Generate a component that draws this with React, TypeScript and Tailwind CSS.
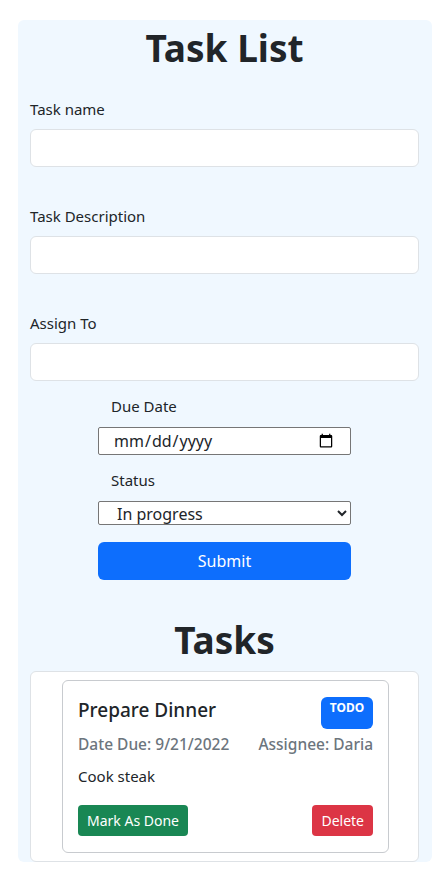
import { useState } from "react";

export default function App() {
  return (
    <main className="min-h-screen bg-white pt-[20px] pr-[14px] pl-[18px] font-['Noto_Sans',sans-serif] text-[#212529]">
      <div className="rounded-md bg-[#f0f8ff] pr-[13px] pl-[12px]">
        <h1 className="pt-[4px] text-center text-[37px] leading-[48px] font-bold">Task List</h1>

        <form className="mt-[25px]" onSubmit={(e) => e.preventDefault()}>
          <Field label="Task name" />
          <Field label="Task Description" />
          <Field label="Assign To" last />

          <div className="mx-auto flex w-[253px] flex-col">
            <label className="pl-[13px] text-[15px] leading-6">Due Date</label>
            <input
              type="date"
              className="mt-[9px] h-[28px] w-full rounded-[2px] border border-[#767676] bg-white px-[14px] text-[16px]"
            />
            <label className="mt-[13px] pl-[13px] text-[15px] leading-6">Status</label>
            <StatusSelect />
            <button
              type="submit"
              className="mt-[17px] h-[38px] w-full rounded-md bg-[#0d6efd] text-[16px] text-white"
            >
              Submit
            </button>
          </div>
        </form>

        <h2 className="mt-[36px] text-center text-[37px] leading-[48px] font-bold">Tasks</h2>

        <div className="mt-[7px] rounded-md border border-[#dee2e6] bg-white py-[8px] pr-[29px] pl-[31px]">
          <TaskCard
            title="Prepare Dinner"
            due="9/21/2022"
            assignee="Daria"
            desc="Cook steak"
            status="TODO"
          />
        </div>
      </div>
    </main>
  );
}

function Field({ label, last }: { label: string; last?: boolean }) {
  return (
    <div className={last ? "mb-[13px]" : "mb-[37px]"}>
      <label className="block text-[15px] leading-6">{label}</label>
      <input
        type="text"
        className="mt-[8px] block h-[38px] w-full rounded-md border border-[#dee2e6] bg-white px-3"
      />
    </div>
  );
}

function StatusSelect() {
  const [value, setValue] = useState("progress");
  return (
    <select
      value={value}
      onChange={(e) => setValue(e.target.value)}
      className="mt-[9px] h-[24px] w-full rounded-[2px] border border-[#767676] bg-white pl-[14px] text-[16px] leading-5"
    >
      <option value="todo">To do</option>
      <option value="progress">In progress</option>
      <option value="done">Done</option>
    </select>
  );
}

function TaskCard({
  title,
  due,
  assignee,
  desc,
  status,
}: {
  title: string;
  due: string;
  assignee: string;
  desc: string;
  status: string;
}) {
  return (
    <div className="rounded-md border border-[#c8cbcf] px-[15px] pt-[16px] pb-[16px]">
      <div className="flex items-start justify-between">
        <h5 className="mt-[1px] text-[19px] leading-6 font-medium">{title}</h5>
        <span className="h-[32px] w-[52px] rounded-md bg-[#0d6efd] pt-[2px] text-center text-[12px] font-bold text-white">
          {status}
        </span>
      </div>
      <div className="mt-[3px] flex justify-between text-[15.5px] leading-6 font-medium text-[#6c757d]">
        <span>Date Due: {due}</span>
        <span>Assignee: {assignee}</span>
      </div>
      <p className="mt-[8px] text-[15px] leading-6">{desc}</p>
      <div className="mt-[17px] flex justify-between">
        <button className="h-[31px] rounded bg-[#198754] px-[9px] text-[14px] text-white">
          Mark As Done
        </button>
        <button className="h-[31px] rounded bg-[#dc3545] px-[9px] text-[14px] text-white">
          Delete
        </button>
      </div>
    </div>
  );
}
